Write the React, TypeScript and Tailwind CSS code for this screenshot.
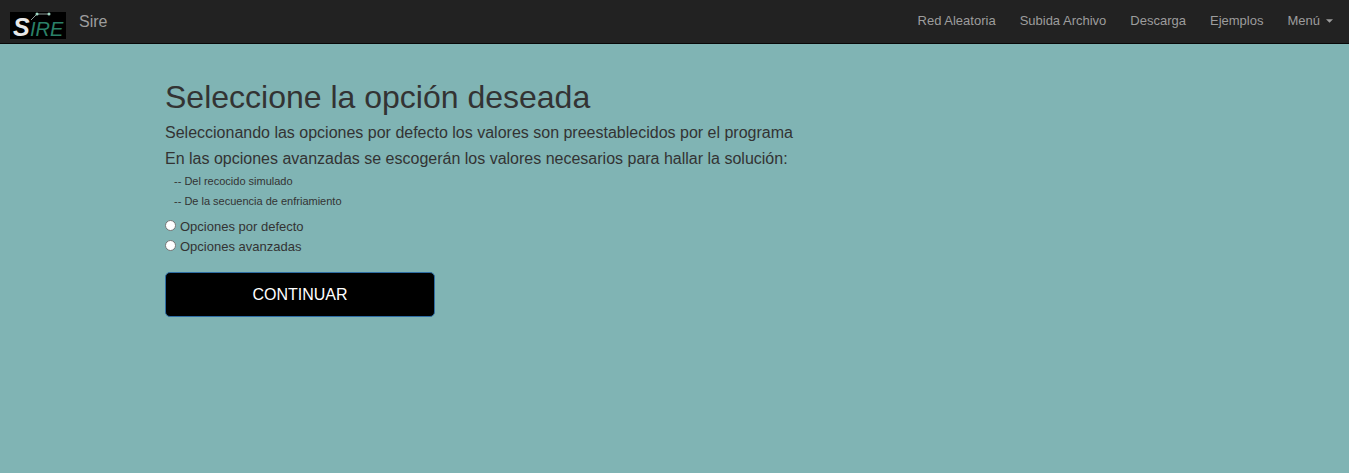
const links = ["Red Aleatoria", "Subida Archivo", "Descarga", "Ejemplos"];

function Logo() {
  return (
    <svg viewBox="0 0 56 27" className="h-[27px] w-14 overflow-visible" role="img" aria-label="Sire">
      <rect width="56" height="27" fill="#000" />
      <g fontFamily="Liberation Sans, Arial, sans-serif" fontStyle="italic">
        <text x="3" y="24" fontSize="25" fontWeight="bold" fill="#e8e8e8">S</text>
        <text x="20" y="24" fontSize="20" fill="#2b8068">IRE</text>
      </g>
      <path d="M21 8 L27 2 H39" fill="none" stroke="#8a9a96" strokeWidth="1" />
      <circle cx="27" cy="2" r="1.5" fill="#9fd8c4" />
      <circle cx="39" cy="2" r="1.5" fill="#9fd8c4" />
    </svg>
  );
}

function Option({ id, label }: { id: string; label: string }) {
  return (
    <div className="flex h-5 items-center gap-1">
      <input
        type="radio"
        id={id}
        name="opcion"
        value={id}
        className="mb-[3px] size-[11px] appearance-none rounded-full border border-[#767676] bg-white checked:border-4 checked:border-[#0075ff]"
      />
      <label htmlFor={id}>{label}</label>
    </div>
  );
}

export default function App() {
  return (
    <div className="min-h-screen bg-[#80b4b4] font-['Liberation_Sans',Arial,sans-serif] text-[13px] leading-5 text-[#333]">
      <nav className="flex h-11 items-center justify-between border-b border-[#080808] bg-[#222] pr-4 pl-[10px] text-[#9d9d9d]">
        <a href="#" className="flex items-center gap-[13px] text-base">
          <span className="pt-2">
            <Logo />
          </span>
          <span>Sire</span>
        </a>
        <ul className="flex items-center gap-6 pb-[2px]">
          {links.map((link) => (
            <li key={link}>
              <a href="#">{link}</a>
            </li>
          ))}
          <li>
            <button type="button" className="flex items-center gap-[6px]">
              Menú
              <svg viewBox="0 0 8 4" className="h-1 w-[7px]" aria-hidden="true">
                <path d="M0 0h8L4 4z" fill="currentColor" />
              </svg>
            </button>
          </li>
        </ul>
      </nav>
      <main className="mx-auto max-w-[1053px] px-[17px] pt-[35px]">
        <h1 className="text-[32px] leading-9">Seleccione la opción deseada</h1>
        <h4 className="mt-[9px] text-base leading-[18px]">
          Seleccionando las opciones por defecto los valores son preestablecidos por el programa
        </h4>
        <h4 className="mt-2 text-base leading-[18px]">
          En las opciones avanzadas se escogerán los valores necesarios para hallar la solución:
        </h4>
        <div className="mt-[3px] pl-[9px] text-[11px] leading-5">
          <p>-- Del recocido simulado</p>
          <p>-- De la secuencia de enfriamiento</p>
        </div>
        <form className="mt-[6px]" onSubmit={(e) => e.preventDefault()}>
          <Option id="defecto" label="Opciones por defecto" />
          <Option id="avanzadas" label="Opciones avanzadas" />
          <button
            type="submit"
            className="mt-[15px] h-[45px] w-[270px] rounded-[5px] border border-[#2e6da4] bg-black text-base text-white"
          >
            CONTINUAR
          </button>
        </form>
      </main>
    </div>
  );
}
